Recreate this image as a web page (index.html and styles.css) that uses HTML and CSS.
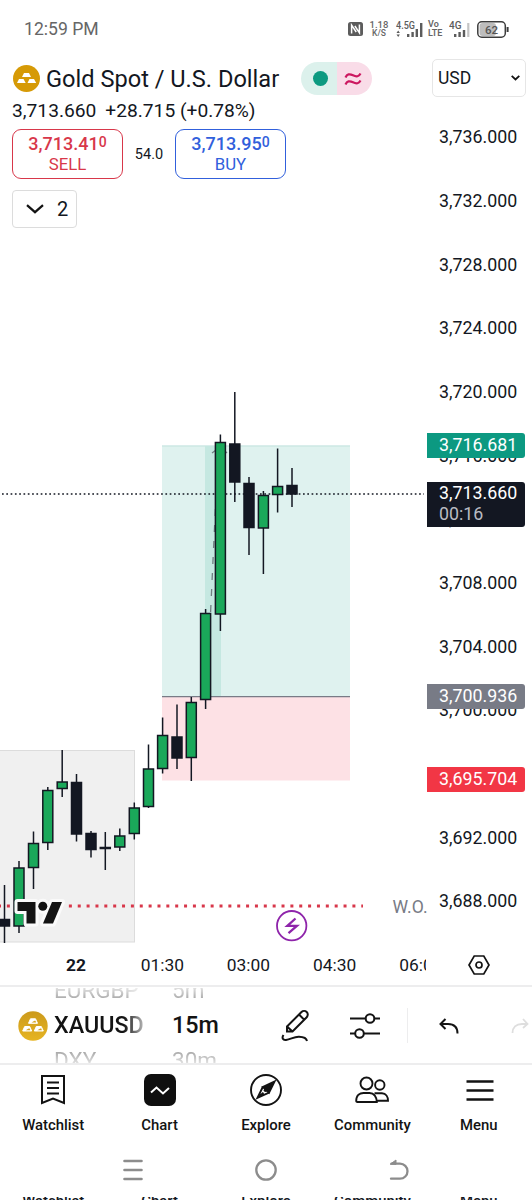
FILE: index.html
```html
<!DOCTYPE html>
<html lang="en">
<head>
    <meta charset="utf-8">
    <meta name="viewport" content="width=device-width, initial-scale=1">
    <title>XAUUSD Chart</title>
    <link rel="stylesheet" href="styles.css">
</head>
<body>
    <div class="status-bar">
        <span class="clock">12:59 PM</span>
        <div class="status-icons">
            <svg class="nfc" width="15" height="14" viewBox="0 0 15 14">
                <rect width="15" height="14" rx="2.5" fill="#5c5c5c"/>
                <path d="M3.6 11.5V3.2l4.6 6.8M11.4 2.5v8.3L6.9 4" fill="none" stroke="#fff" stroke-width="1.5"/>
            </svg>
            <div class="stack speed"><span>1.18</span><small>K/S</small></div>
            <svg class="signal" width="28" height="18" viewBox="0 0 28 18">
                <text x="0" y="8.5" font-size="10" textLength="19" lengthAdjust="spacingAndGlyphs">4.5G</text>
                <path d="M0.5 13 2.2 10.6 3.9 13zM0.5 14.5l1.7 2.4 1.7-2.4z"/>
                <path d="M11 14h2.4v3H11zM15.4 12h2.4v5h-2.4zM19.6 9H22v8h-2.4zM24 3h2.4v14H24z"/>
            </svg>
            <div class="stack lte"><span>Vo</span><span>LTE</span></div>
            <svg class="signal sim2" width="21" height="18" viewBox="0 0 21 18">
                <text x="0" y="8.5" font-size="10" textLength="12.5" lengthAdjust="spacingAndGlyphs">4G</text>
                <path d="M5 14h2.4v3H5zM9.4 12h2.4v5H9.4zM13.8 10h2.4v7h-2.4z"/>
                <path class="off" d="M18.2 3h2.2v14h-2.2z"/>
            </svg>
            <svg class="battery" width="32" height="17" viewBox="0 0 32 17">
                <rect x="2.5" y="2" width="16.5" height="13" rx="3" fill="#bdbdbd"/>
                <rect x="0.8" y="0.8" width="27.5" height="15.4" rx="4" fill="none" stroke="#3c3c3c" stroke-width="1.5"/>
                <path d="M30.6 6v5" stroke="#3c3c3c" stroke-width="2"/>
                <text x="14.5" y="12.6" font-size="11.5" text-anchor="middle" fill="#555">62</text>
            </svg>
        </div>
    </div>

    <div class="chart">
        <svg class="plot" width="427" height="885" viewBox="0 58 427 885">
            <!-- session box -->
            <rect x="-1" y="750.5" width="135.5" height="191.5" fill="#f0f0f0" stroke="#dcdcdc"/>

            <!-- long position -->
            <rect x="162" y="445.5" width="188" height="251" fill="#dff2ef"/>
            <path d="M162 446h188" stroke="#c3e3de"/>
            <rect x="205" y="446" width="16" height="250" fill="#c5e8e1"/>
            <rect x="162" y="697" width="188" height="83.5" fill="#fde1e5"/>
            <path d="M162 696.7h188" stroke="#787b86" stroke-width="1.3"/>
            <path d="M210.6 612 218 453" stroke="#6f7e80" stroke-width="1.3" stroke-dasharray="7 9"/>
            <path d="M212 453l4-3M224 450l3 3" stroke="#6f7e80" stroke-width="1.2"/>

            <path class="weekly-open" d="M-1 906H363"/>
            <path class="last-price" d="M2 494H424"/>

            <g id="candles"></g>

            <!-- TradingView mark -->
            <g stroke="#fafafa" stroke-width="6" stroke-linejoin="round">
                <path d="M17.5 902h18v21.5h-9V911h-9z"/>
                <circle cx="42.8" cy="906.2" r="4.5"/>
                <path d="M52 902h10l-9 21.5H43z"/>
            </g>
            <g fill="#131313">
                <path d="M17.5 902h18v21.5h-9V911h-9z"/>
                <circle cx="42.8" cy="906.2" r="4.5"/>
                <path d="M52 902h10l-9 21.5H43z"/>
            </g>

            <text class="wo-label" x="392.5" y="913">W.O.</text>

            <circle cx="291.7" cy="925.7" r="14.7" fill="#fff" stroke="#8e24aa" stroke-width="1.8"/>
            <path d="M295.5 918.5l-8.2 7.4h9.6l-8.4 7.2" fill="none" stroke="#8e24aa" stroke-width="2.3"/>
        </svg>

        <div class="legend">
            <div class="symbol-row">
                <svg width="27" height="27" viewBox="0 0 27 27">
                    <circle cx="13.5" cy="13.5" r="13.5" fill="#d69a06"/>
                    <path d="M11 8h5l2 4H9zM6 14h4.5l2.2 4H4zM16.5 14H21l2.2 4h-8.700z" fill="#fff"/>
                </svg>
                <h1>Gold Spot / U.S. Dollar</h1>
                <div class="market-pill">
                    <span class="open"><i></i></span>
                    <span class="delayed">
                        <svg width="18" height="14" viewBox="0 0 18 14" fill="none" stroke="#cc1860" stroke-width="2.2">
                            <path d="M1.5 5.5C3 2 5.500 1.500 9 3.300S15 4.500 16.500 1.500M1.500 12.500C3 9 5.500 8.500 9 10.300s6 1.200 7.500-1.800"/>
                        </svg>
                    </span>
                </div>
            </div>
            <div class="quote"><span>3,713.660</span><span>+28.715 (+0.78%)</span></div>
            <div class="trade">
                <button class="sell"><b>3,713.41<sup>0</sup></b>SELL</button>
                <span class="spread">54.0</span>
                <button class="buy"><b>3,713.95<sup>0</sup></b>BUY</button>
            </div>
            <button class="indicators">
                <svg width="18" height="10" viewBox="0 0 18 10" fill="none" stroke="#131313" stroke-width="2.2"><path d="M1 1.2l8 7 8-7"/></svg>
                2
            </button>
        </div>

        <div class="price-axis">
            <button class="currency">USD
                <svg width="9" height="6" viewBox="0 0 9 6" fill="none" stroke="#131313" stroke-width="1.8"><path d="M0.7 0.8l3.8 3.6L8.3 0.8"/></svg>
            </button>
            <div class="ticks" id="ticks"></div>
            <div class="tag target">3,716.681</div>
            <div class="tag last">3,713.660<span>00:16</span></div>
            <div class="tag entry">3,700.936</div>
            <div class="tag stop">3,695.704</div>
        </div>
    </div>

    <div class="time-axis">
        <div class="times">
            <span><b>22</b></span><span>01:30</span><span>03:00</span><span>04:30</span><span>06:00</span>
        </div>
        <svg width="22" height="20" viewBox="0 0 22 20" fill="none" stroke="#131313" stroke-width="1.7">
            <path d="M6.2 1h9.6L21 10l-5.2 9H6.2L1 10z"/>
            <circle cx="11" cy="10" r="3"/>
        </svg>
    </div>

    <div class="toolbar">
        <svg class="gold" width="30" height="30" viewBox="0 0 30 30">
            <defs><linearGradient id="gold" x1="0" y1="0" x2="0" y2="1"><stop offset="0" stop-color="#cc9a1c"/><stop offset="1" stop-color="#e6b422"/></linearGradient></defs>
            <circle cx="15" cy="15" r="14.7" fill="url(#gold)"/>
            <path d="M12.5 7.800h5l2 4.500h-9zM6.700 15.500h5l2 4.500h-9zM18.300 15.500h5l2 4.500h-9z" fill="#fff" stroke="#fff" stroke-linejoin="round"/>
            <path d="M13.500 11.500l3-1.800h1l.6 1.800zM7.700 19.200l3-1.800h1l.6 1.800zM19.300 19.200l3-1.800h1l.6 1.800z" fill="#d6a41f"/>
        </svg>
        <div class="wheel symbols"><span>EURGBP</span><strong>XAUUSD</strong><span>DXY</span></div>
        <div class="wheel intervals"><span>5m</span><strong>15m</strong><span>30m</span></div>
        <svg class="draw" width="30" height="34" viewBox="0 0 30 34" fill="none" stroke="#131313" stroke-width="2">
            <path d="M6 17.5 20.5 3a3.6 3.6 0 0 1 5.2 5.2L11.5 22.500H6zM18 5.500l5.500 5.500M6 17.500l5.500 5"/>
            <path d="M2.5 26C.5 29 2 31.500 5 31c5-.8 8-3.500 13-3.300 5 .1 7.500 1.500 8 4.300"/>
        </svg>
        <svg class="settings" width="30" height="26" viewBox="0 0 30 26" fill="none" stroke="#131313" stroke-width="2">
            <path d="M0 5.500h15.500M24.500 5.500H30M0 20.500h5M14 20.500h16"/>
            <circle cx="20" cy="5.500" r="4.300"/><circle cx="9.500" cy="20.500" r="4.300"/>
        </svg>
        <i class="divider"></i>
        <svg class="undo" width="20" height="16" viewBox="0 0 20 16" fill="none" stroke="#131313" stroke-width="2">
            <path d="M6.500 1 1.500 6l5 5M2 6h7c6 0 9.500 3.500 9.500 9.500"/>
        </svg>
        <svg class="redo" width="18" height="16" viewBox="0 0 18 16" fill="none" stroke="#dedede" stroke-width="1.8">
            <path d="M12 1l4.500 5-4.500 4M16.500 6H11C5 6 1.500 9.500 1.500 15"/>
        </svg>
    </div>

    <nav class="tabs">
        <a>
            <svg width="32" height="32" viewBox="0 0 32 32" fill="none" stroke="#131313" stroke-width="2">
                <path d="M5 2h22v27l-11-4.500L5 29zM10 8.500h12M10 14h12M10 19.500h12"/>
            </svg>
            Watchlist
        </a>
        <a>
            <svg width="32" height="32" viewBox="0 0 32 32">
                <rect width="32" height="32" rx="7" fill="#0f0f0f"/>
                <path d="M7 18.500l5.500-5 6.500 6 6-5.500" fill="none" stroke="#fff" stroke-width="2"/>
            </svg>
            Chart
        </a>
        <a>
            <svg width="32" height="32" viewBox="0 0 32 32" fill="none" stroke="#131313" stroke-width="1.9">
                <circle cx="16" cy="16" r="15"/>
                <path d="M24.500 7.500 19 18.700 12.800 13z" fill="#131313"/>
                <path d="M12.800 13 7.500 23.800 19 18.700M7.500 23.800l6-5"/>
                <circle cx="15.500" cy="16.300" r="1.800" fill="#131313" stroke="none"/>
            </svg>
            Explore
        </a>
        <a>
            <svg width="34" height="32" viewBox="0 0 34 32" fill="none" stroke="#131313" stroke-width="1.9">
                <circle cx="11.500" cy="9.500" r="6"/><circle cx="24.800" cy="11" r="4.700"/>
                <path d="M1.200 27c0-6 3.800-8 7.300-8h6c4.500 0 7.300 4 7.300 9H2.500q-1.300 0-1.300-1zM19.500 19.300h7.500c4 0 6 3.500 6 7.500H21.800"/>
            </svg>
            Community
        </a>
        <a>
            <svg width="32" height="32" viewBox="0 0 32 32" stroke="#131313" stroke-width="2.6"><path d="M3.500 7.500h27M3.500 16.500h27M3.500 25.500h27"/></svg>
            Menu
        </a>
    </nav>

    <div class="system-nav">
        <svg width="20" height="22" viewBox="0 0 20 22" stroke="#8c8c8c" stroke-width="2.6" stroke-linecap="round"><path d="M1.500 2h17M1.500 11h17M1.500 20h17"/></svg>
        <svg width="22" height="22" viewBox="0 0 22 22" fill="none" stroke="#8c8c8c" stroke-width="2.300"><circle cx="11" cy="11" r="9.700"/></svg>
        <svg width="20" height="22" viewBox="0 0 20 22" fill="none" stroke="#8c8c8c" stroke-width="2.300" stroke-linecap="round">
            <path d="M2.500 4.700H11a7.500 7.500 0 0 1 0 15H2"/><path d="M1.500 5 7 1v4z" fill="#8c8c8c" stroke-width="1"/>
        </svg>
    </div>

    <div class="overscroll"><span>Watchlist</span><span>Chart</span><span>Explore</span><span>Community</span><span>Menu</span></div>

    <script src="chart.js"></script>
</body>
</html>
```
FILE: styles.css
```css
:root {
    --text: #131722;
    --ink: #131313;
    --line: #ededee;
    --green: #1aa85a;
    --red: #d8374a;
    --blue: #3160dc;
}

* {
    box-sizing: border-box;
    margin: 0;
    padding: 0;
}

body {
    width: 532px;
    height: 1200px;
    overflow: hidden;
    background: #fff;
    color: var(--text);
    font-family: Roboto, "Liberation Sans", sans-serif;
}

svg {
    display: block;
    flex-shrink: 0;
}

button {
    background: #fff;
    font-family: inherit;
    color: inherit;
}

/* phone status bar */
.status-bar {
    display: flex;
    align-items: center;
    justify-content: space-between;
    height: 58px;
    padding: 0 23px 0 24px;
    color: #666;
}

.clock {
    font-size: 17.6px;
}

.status-icons {
    display: flex;
    align-items: center;
    font-weight: 500;
    fill: #5c5c5c;
}

.stack {
    display: flex;
    flex-direction: column;
    align-items: center;
    font-size: 9.5px;
    line-height: 9px;
}

.stack small {
    font-size: 8.5px;
}

.speed {
    width: 20px;
    margin: 0 7px 0 6px;
}

.lte {
    align-items: flex-start;
    width: 15px;
    margin: 0 6px 0 4px;
    font-size: 9px;
    font-weight: 600;
}

.sim2 .off {
    fill: #c4c4c4;
}

.battery {
    margin-left: 7px;
}

/* plot and legend share one grid cell */
.chart {
    display: grid;
    grid-template-columns: 427px 105px;
    height: 885px;
}

.plot,
.legend {
    grid-area: 1 / 1;
}

.last-price {
    stroke: #131722;
    stroke-width: 1.6;
    stroke-dasharray: 1.7 2.6;
}

.weekly-open {
    stroke: var(--red);
    stroke-width: 3;
    stroke-dasharray: 3 5.86;
    stroke-dashoffset: 1;
}

.wo-label {
    font-size: 17.6px;
    fill: #787b86;
}

.candle {
    stroke: #131722;
    stroke-width: 1.5;
}

.candle.up rect {
    fill: var(--green);
}

.candle.down rect {
    fill: #131722;
}

.legend {
    display: flex;
    flex-direction: column;
    align-items: flex-start;
    padding: 4px 0 0 12px;
}

.symbol-row {
    display: flex;
    align-items: center;
    height: 33px;
    padding-left: 1px;
}

h1 {
    width: 233px;
    margin: 0 22px 0 6px;
    font-size: 23.6px;
    font-weight: 400;
    white-space: nowrap;
}

.market-pill {
    display: flex;
    width: 71px;
    height: 33px;
    border-radius: 17px;
    overflow: hidden;
}

.market-pill span {
    display: flex;
    flex: 1;
    align-items: center;
    justify-content: center;
}

.market-pill .open {
    background: #dcf1ec;
    padding-left: 3px;
}

.market-pill .delayed {
    background: #f9dce8;
    padding-right: 3px;
}

.market-pill i {
    width: 15px;
    height: 15px;
    border-radius: 50%;
    background: #0c9a80;
}

.quote {
    display: flex;
    gap: 9px;
    height: 34px;
    line-height: 31px;
    font-size: 19.2px;
}

.trade {
    display: flex;
    align-items: center;
    height: 50px;
}

.trade button {
    display: flex;
    flex-direction: column;
    align-items: center;
    width: 111px;
    height: 50px;
    padding-top: 4px;
    border: 1.5px solid;
    border-radius: 9px;
    font-size: 16.8px;
    line-height: 20px;
}

.trade b {
    font-size: 18px;
    font-weight: 500;
}

.trade sup {
    font-size: 14px;
    line-height: 0;
    vertical-align: 3px;
}

.sell {
    color: var(--red);
}

.buy {
    color: var(--blue);
}

.spread {
    width: 52px;
    text-align: center;
    font-size: 14.5px;
}

.indicators {
    display: flex;
    align-items: center;
    gap: 13px;
    width: 65px;
    height: 38px;
    margin-top: 11px;
    padding-left: 13px;
    border: 1.5px solid #dcdcdc;
    border-radius: 4px;
    font-size: 20px;
}

.price-axis {
    position: relative;
    grid-area: 1 / 2;
}

.currency {
    display: flex;
    align-items: center;
    justify-content: space-between;
    width: 94px;
    height: 38px;
    margin: 1px 0 0 5px;
    padding: 0 5px;
    border: 1.5px solid #e6e6e6;
    border-radius: 5px;
    font-size: 17.5px;
}

.ticks {
    display: grid;
    grid-auto-rows: 63.67px;
    align-items: center;
    margin-top: 8px;
    padding-left: 12px;
    font-size: 17.8px;
}

.tag {
    position: absolute;
    left: 0;
    width: 98px;
    height: 25px;
    padding-left: 12px;
    border-radius: 0 3px 3px 0;
    color: #fff;
    font-size: 17.8px;
    line-height: 24px;
}

.tag.target {
    top: 375px;
    background: #0c9981;
}

.tag.last {
    top: 424px;
    height: 45px;
    line-height: 22px;
    background: #131722;
}

.tag.last span {
    display: block;
    line-height: 20px;
    color: #b9bbc2;
}

.tag.entry {
    top: 626px;
    background: #787b86;
}

.tag.stop {
    top: 709px;
    background: #f23645;
}

.time-axis {
    display: flex;
    align-items: center;
    height: 44px;
    padding-top: 2px;
    border-bottom: 2px solid var(--line);
    font-size: 17.4px;
}

.times {
    display: flex;
    width: 426px;
    margin-right: 42px;
    padding-left: 33px;
    overflow: hidden;
}

.times span {
    flex: 0 0 86.2px;
    text-align: center;
}

/* symbol and interval wheels */
.toolbar {
    display: flex;
    align-items: center;
    height: 78px;
    padding: 1px 0 0 18px;
    border-bottom: 2px solid var(--line);
    overflow: hidden;
}

.wheel {
    display: flex;
    flex-direction: column;
    justify-content: center;
    height: 76px;
    overflow: hidden;
    line-height: 35px;
    font-size: 22.5px;
    color: #a8a8a8;
    white-space: nowrap;
}

.wheel span {
    flex-shrink: 0;
}

.wheel span:first-child {
    -webkit-mask-image: linear-gradient(to top, #000 25%, rgba(0, 0, 0, 0.3) 60%);
    mask-image: linear-gradient(to top, #000 25%, rgba(0, 0, 0, 0.3) 60%);
}

.wheel span:last-child {
    -webkit-mask-image: linear-gradient(to bottom, #000 25%, rgba(0, 0, 0, 0.3) 60%);
    mask-image: linear-gradient(to bottom, #000 25%, rgba(0, 0, 0, 0.3) 60%);
}

.wheel strong {
    flex-shrink: 0;
    color: var(--ink);
    font-size: 23.3px;
    font-weight: 500;
}

.symbols {
    width: 91px;
    margin-left: 6px;
    -webkit-mask-image: linear-gradient(to right, #000 70px, transparent 98px);
    mask-image: linear-gradient(to right, #000 70px, transparent 98px);
}

.intervals {
    width: 50px;
    margin-left: 27px;
}

.draw {
    margin-left: 59px;
}

.settings {
    margin-left: 39px;
}

.divider {
    width: 1px;
    height: 35px;
    margin: 0 31px 0 27px;
    background: var(--line);
}

.redo {
    margin-left: 52px;
}

.tabs {
    display: grid;
    grid-template-columns: repeat(5, 1fr);
    height: 76px;
    padding-top: 9px;
}

.tabs a {
    display: flex;
    flex-direction: column;
    align-items: center;
    gap: 9px;
    color: var(--ink);
    font-size: 14.9px;
    font-weight: 500;
    line-height: 20px;
}

.system-nav {
    display: flex;
    justify-content: space-between;
    height: 56px;
    padding: 18px 123px 0 123px;
}

/* next screen's tab labels peeking in at the bottom */
.overscroll {
    display: grid;
    grid-template-columns: repeat(5, 1fr);
    height: 3px;
    overflow: hidden;
    text-align: center;
    font-size: 14.9px;
    font-weight: 500;
    line-height: 8px;
}
```
FILE: chart.js
```javascript
// x centre, high, body top, body bottom, low (plot coordinates), direction
const candles = [
    [4.5, 885, 919.5, 926, 943, 'down'],
    [19, 861, 868, 926, 933, 'up'],
    [33.5, 831.5, 843.5, 867.5, 889, 'up'],
    [47.8, 787, 790.5, 842.5, 850, 'up'],
    [62.2, 750, 782, 788.5, 797, 'up'],
    [76.5, 774, 782.5, 834, 841.5, 'down'],
    [91, 831, 833.5, 849.5, 857.5, 'down'],
    [105.3, 832, 847.5, 848.5, 870, 'down'],
    [119.8, 828.5, 836, 847, 851, 'up'],
    [134.3, 802.5, 808, 833.5, 839.5, 'up'],
    [148.5, 744.5, 769, 806.5, 808, 'up'],
    [162.6, 717.5, 735.5, 768.5, 773.5, 'up'],
    [177, 704.5, 737, 758, 769, 'down'],
    [191.3, 697, 702.5, 757.5, 781, 'up'],
    [205.6, 609, 613.5, 699.5, 709, 'up'],
    [220.4, 434.5, 442.5, 614, 631, 'up'],
    [234.8, 392, 444, 482, 502, 'down'],
    [249, 477, 483.5, 527.5, 555, 'down'],
    [263.4, 491, 495.5, 528, 574, 'up'],
    [277.6, 448.5, 486.5, 494.5, 512.5, 'up'],
    [292, 468, 485.5, 494, 507, 'down']
];

document.getElementById('candles').innerHTML = candles.map(([x, high, top, bottom, low, dir]) => `
    <g class="candle ${dir}">
        <path d="M${x} ${high}V${low}"/>
        <rect x="${x - 5}" y="${top}" width="10" height="${bottom - top}"/>
    </g>`).join('');

let ticks = '';
for (let price = 3736; price >= 3688; price -= 4) {
    ticks += `<span>${price.toLocaleString('en-US', { minimumFractionDigits: 3 })}</span>`;
}
document.getElementById('ticks').innerHTML = ticks;
```
